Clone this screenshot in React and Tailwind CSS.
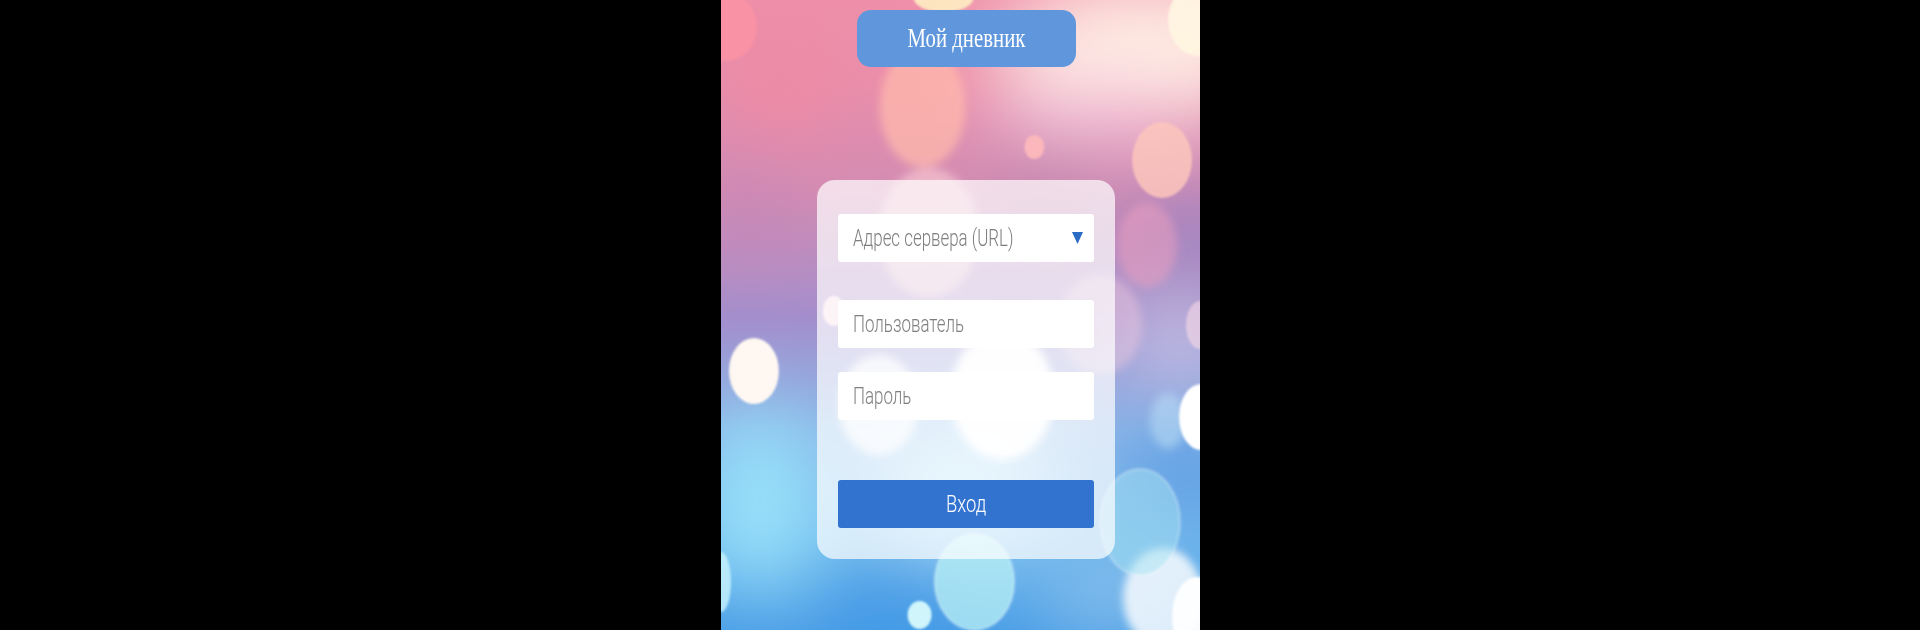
const bubbles = [
  // top half
  { cx: 5, cy: 27, rx: 31, ry: 34, fill: "#fb93a4", o: 0.85 },
  { cx: 223, cy: -2, rx: 30, ry: 14, fill: "#fff3c4", o: 0.85 },
  { cx: 478, cy: 20, rx: 30, ry: 36, fill: "#fff6e2", o: 0.95 },
  { cx: 202, cy: 107, rx: 43, ry: 60, fill: "#ffb9ac", o: 0.75, blur: true },
  { cx: 208, cy: 233, rx: 50, ry: 65, fill: "#ffd5d8", o: 0.55, blur: true },
  { cx: 314, cy: 147, rx: 10, ry: 12, fill: "#fdb8ba", o: 0.95 },
  { cx: 442, cy: 160, rx: 30, ry: 38, fill: "#fdc6bc", o: 0.85 },
  { cx: 427, cy: 245, rx: 30, ry: 42, fill: "#f0a0c0", o: 0.5, blur: true },
  { cx: 113, cy: 311, rx: 11, ry: 15, fill: "#ffe3e6", o: 0.9 },
  { cx: 380, cy: 325, rx: 42, ry: 50, fill: "#fbd0de", o: 0.4, blur: true },
  { cx: 480, cy: 325, rx: 14, ry: 24, fill: "#f8dbe6", o: 0.6 },
  // bottom half
  { cx: 33, cy: 371, rx: 25, ry: 33, fill: "#fff8f2", o: 1 },
  { cx: 158, cy: 405, rx: 40, ry: 50, fill: "#ffffff", o: 0.75, blur: true },
  { cx: 282, cy: 395, rx: 52, ry: 65, fill: "#ffffff", o: 0.95, blur: true },
  { cx: 448, cy: 421, rx: 18, ry: 28, fill: "#bfe4f8", o: 0.5, blur: true },
  { cx: 481, cy: 417, rx: 22, ry: 33, fill: "#ffffff", o: 1 },
  { cx: 420, cy: 522, rx: 40, ry: 53, fill: "#a8e4f2", o: 0.5, ring: true },
  { cx: 443, cy: 598, rx: 40, ry: 50, fill: "#ffffff", o: 0.8, blur: true },
  { cx: 477, cy: 617, rx: 25, ry: 40, fill: "#ffffff", o: 0.95 },
  { cx: 254, cy: 582, rx: 40, ry: 48, fill: "#b8f0f6", o: 0.75, ring: true },
  { cx: 199, cy: 615, rx: 12, ry: 14, fill: "#d0f6fc", o: 1 },
  { cx: 0, cy: 582, rx: 10, ry: 30, fill: "#c8f4fc", o: 0.8 },
];

function Backdrop() {
  return (
    <svg className="absolute inset-0 h-full w-full" viewBox="0 0 480 630" preserveAspectRatio="none">
      <defs>
        <linearGradient id="base" x1="0" y1="0" x2="0" y2="1">
          <stop offset="0" stopColor="#ee90aa" />
          <stop offset="0.3" stopColor="#d48cb2" />
          <stop offset="0.5" stopColor="#a48ecc" />
          <stop offset="0.68" stopColor="#8ab4e6" />
          <stop offset="0.85" stopColor="#6cb6ec" />
          <stop offset="1" stopColor="#4c9fe6" />
        </linearGradient>
        <filter id="soft" x="-60%" y="-60%" width="220%" height="220%">
          <feGaussianBlur stdDeviation="38" />
        </filter>
        <filter id="edge" x="-10%" y="-10%" width="120%" height="120%">
          <feGaussianBlur stdDeviation="1.2" />
        </filter>
        <filter id="haze" x="-10%" y="-10%" width="120%" height="120%">
          <feGaussianBlur stdDeviation="4" />
        </filter>
      </defs>
      <rect width="480" height="630" fill="url(#base)" />
      <g filter="url(#soft)">
        <ellipse cx="420" cy="50" rx="140" ry="70" fill="#ffeee4" />
        <ellipse cx="370" cy="115" rx="100" ry="30" fill="#f2bcd8" />
        <ellipse cx="60" cy="80" rx="60" ry="60" fill="#f08aa4" />
        <ellipse cx="210" cy="60" rx="70" ry="35" fill="#f48ea6" />
        <ellipse cx="470" cy="240" rx="60" ry="50" fill="#9e82c0" />
        <ellipse cx="330" cy="190" rx="60" ry="28" fill="#b47aa8" />
        <ellipse cx="30" cy="210" rx="40" ry="40" fill="#c486b8" />
        <ellipse cx="40" cy="500" rx="60" ry="90" fill="#9ae2fa" />
        <ellipse cx="240" cy="480" rx="90" ry="60" fill="#b8e4fa" />
        <ellipse cx="460" cy="340" rx="60" ry="40" fill="#c8c4e6" />
        <ellipse cx="470" cy="470" rx="60" ry="50" fill="#5e9ee4" />
        <ellipse cx="390" cy="590" rx="70" ry="40" fill="#8ac0ec" />
        <ellipse cx="160" cy="620" rx="90" ry="30" fill="#3f98e6" />
      </g>
      <g filter="url(#haze)">
        {bubbles.filter((b) => b.blur).map((b, i) => (
          <ellipse key={i} cx={b.cx} cy={b.cy} rx={b.rx} ry={b.ry} fill={b.fill} fillOpacity={b.o} />
        ))}
      </g>
      <g filter="url(#edge)">
        {bubbles.filter((b) => !b.blur).map((b, i) => (
          <ellipse
            key={i}
            cx={b.cx}
            cy={b.cy}
            rx={b.rx}
            ry={b.ry}
            fill={b.fill}
            fillOpacity={b.o}
            stroke={b.ring ? "#ffffff" : "none"}
            strokeOpacity="0.2"
            strokeWidth="3"
          />
        ))}
      </g>
    </svg>
  );
}

function Field({ label, arrow }) {
  return (
    <div className="flex h-12 w-64 items-center justify-between rounded-[3px] bg-white pl-[15px] pr-[11px]">
      <span className="origin-left scale-x-[0.735] whitespace-nowrap pt-[2px] font-['Roboto',sans-serif] text-[23px] font-light text-[#7e7e7e]">
        {label}
      </span>
      {arrow && (
        <svg className="shrink-0" width="11" height="12" viewBox="0 0 11 12">
          <path d="M0 0H11L5.5 12Z" fill="#2a6cc4" />
        </svg>
      )}
    </div>
  );
}

export default function App() {
  return (
    <div className="flex h-[630px] justify-center bg-black pl-px">
      <div className="relative h-full w-[479px] overflow-hidden">
        <Backdrop />

        <div className="relative flex flex-col items-center pl-[11px]">
          <div className="mt-[10px] flex h-[57px] w-[219px] items-center justify-center rounded-[14px] bg-[#6096db]">
            <span className="scale-x-[0.77] whitespace-nowrap font-['Liberation_Serif',serif] text-[27px] text-white">
              Мой дневник
            </span>
          </div>

          <div className="mt-[113px] flex h-[379px] w-[298px] flex-col items-center rounded-[18px] bg-white/70 pt-[34px]">
            <Field label="Адрес сервера (URL)" arrow />
            <div className="mt-[38px]">
              <Field label="Пользователь" />
            </div>
            <div className="mt-[24px]">
              <Field label="Пароль" />
            </div>
            <button className="mt-[60px] flex h-12 w-64 items-center justify-center rounded-[3px] bg-[#3273d0]">
              <span className="scale-x-[0.8] pt-[2px] font-['Roboto',sans-serif] text-[23px] font-light text-white">Вход</span>
            </button>
          </div>
        </div>
      </div>
    </div>
  );
}
